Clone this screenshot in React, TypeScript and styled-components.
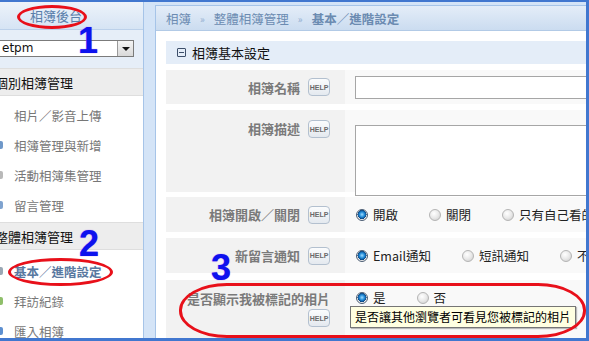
import React from 'react';
import styled, { createGlobalStyle } from 'styled-components';

const GlobalStyle = createGlobalStyle`
    html, body {
        margin: 0;
        padding: 0;
        background: #ffffff;
    }
    body {
        font-family: 'Noto Sans CJK TC', 'Liberation Sans', sans-serif;
        font-size: 13px;
    }
`;

const cjk = `'Noto Sans CJK TC', 'Liberation Sans', sans-serif`;

const Page = styled.div`
    position: relative;
    width: 589px;
    height: 341px;
    overflow: hidden;
`;

const Frame = styled.div`
    box-sizing: border-box;
    width: 589px;
    height: 341px;
    display: flex;
    background: #d4e4f7;
    border-top: 2px solid #4177cf;
    border-right: 3px solid #4177cf;
    border-bottom: 3px solid #4177cf;
`;

const Sidebar = styled.aside`
    width: 143px;
    flex-shrink: 0;
    display: flex;
    flex-direction: column;
    background: #ffffff;
    border-right: 1px solid #a6c4e8;
    overflow: hidden;
`;

const SideHeader = styled.div`
    box-sizing: border-box;
    height: 28px;
    flex-shrink: 0;
    display: flex;
    align-items: center;
    padding-left: 30px;
    background: linear-gradient(#edf3fa, #d6e4f4);
    border-bottom: 1px solid #bcd1ea;
`;

const SideTitle = styled.span`
    font-family: ${cjk};
    font-size: 13px;
    color: #5a7fab;
`;

const SelectRow = styled.div`
    box-sizing: border-box;
    height: 38px;
    flex-shrink: 0;
    padding-top: 10px;
    background: #e6eef8;
`;

const Select = styled.div`
    box-sizing: border-box;
    width: 134px;
    height: 17px;
    display: flex;
    align-items: center;
    justify-content: space-between;
    background: #ffffff;
    border: 1px solid #7b7b7b;
    border-left: none;
`;

const SelectText = styled.span`
    font-family: 'DejaVu Sans', 'Liberation Sans', sans-serif;
    font-size: 12px;
    color: #111;
    padding-left: 2px;
    line-height: 15px;
`;

const SelectButton = styled.span`
    box-sizing: border-box;
    width: 16px;
    height: 15px;
    display: flex;
    align-items: center;
    justify-content: center;
    background: linear-gradient(#f4f4f4, #d9d9d9);
    border-left: 1px solid #9a9a9a;
`;

const Arrow = styled.span`
    width: 0;
    height: 0;
    border-left: 4px solid transparent;
    border-right: 4px solid transparent;
    border-top: 4px solid #111;
`;

const GroupTitle = styled.div`
    box-sizing: border-box;
    height: 28px;
    flex-shrink: 0;
    display: flex;
    align-items: center;
    background: #ededed;
    border-top: 1px solid #dedede;
    border-bottom: 1px solid #dedede;
    font-family: ${cjk};
    font-size: 13px;
    color: #111;
    white-space: nowrap;

    span {
        margin-left: -5px;
    }
`;

const MenuList = styled.ul<{ $top: number; $bottom: number }>`
    flex-shrink: 0;
    list-style: none;
    margin: 0;
    padding: ${({ $top, $bottom }) => `${$top}px 0 ${$bottom}px`};
`;

const MenuItem = styled.li<{ $active?: boolean }>`
    height: 30px;
    display: flex;
    align-items: center;
    font-family: ${cjk};
    font-size: 12.5px;
    white-space: nowrap;
    color: ${({ $active }) => ($active ? '#58789f' : '#777777')};
    font-weight: ${({ $active }) => ($active ? 700 : 400)};
`;

const Bullet = styled.span<{ $color: string }>`
    width: 3px;
    height: 8px;
    margin-right: 11px;
    background: ${({ $color }) => $color};
    border-radius: 0 2px 2px 0;
`;

const Main = styled.main`
    flex: 1;
    min-width: 0;
    margin: 3px 0 0 11px;
    display: flex;
    flex-direction: column;
    background: #ffffff;
    border-left: 1px solid #a6c4e8;
    border-top: 1px solid #a6c4e8;
    overflow: hidden;
`;

const Crumbs = styled.nav`
    box-sizing: border-box;
    height: 25px;
    flex-shrink: 0;
    display: flex;
    align-items: center;
    padding-left: 10px;
    background: linear-gradient(#e4edf8, #cbdcf0);
    border-bottom: 1px solid #b2cae6;
    font-family: ${cjk};
    font-size: 12.5px;
    color: #6b8bb1;
    white-space: nowrap;
`;

const Crumb = styled.span<{ $current?: boolean }>`
    font-weight: ${({ $current }) => ($current ? 700 : 400)};
`;

const CrumbSep = styled.span`
    margin: 0 9px;
    font-size: 10px;
    color: #93aed0;
`;

const Content = styled.div`
    padding: 10px 0 0 10px;
    display: flex;
    flex-direction: column;
`;

const SectionBar = styled.div`
    height: 23px;
    flex-shrink: 0;
    display: flex;
    align-items: center;
    gap: 6px;
    padding-left: 11px;
    margin-bottom: 6px;
    background: #e4edf8;
    font-family: ${cjk};
    font-size: 13px;
    color: #111;
    white-space: nowrap;
`;

const Collapse = styled.span`
    box-sizing: border-box;
    width: 9px;
    height: 9px;
    border: 1px solid #3d4f6a;
    border-radius: 1px;
    display: flex;
    align-items: center;
    justify-content: center;

    &::after {
        content: '';
        width: 5px;
        height: 1px;
        background: #3d4f6a;
    }
`;

const FormRow = styled.div<{ $height: number; $gap: number }>`
    display: flex;
    flex-shrink: 0;
    height: ${({ $height }) => $height}px;
    margin-bottom: ${({ $gap }) => $gap}px;
`;

const LabelCell = styled.div<{ $top?: boolean }>`
    box-sizing: border-box;
    width: 179px;
    flex-shrink: 0;
    display: flex;
    flex-wrap: wrap;
    justify-content: flex-end;
    align-items: ${({ $top }) => ($top ? 'flex-start' : 'center')};
    align-content: ${({ $top }) => ($top ? 'flex-start' : 'center')};
    padding: ${({ $top }) => ($top ? '10px 15px 0 0' : '0 15px 0 0')};
    row-gap: 2px;
    background: #f2f2f2;
`;

const LabelText = styled.span`
    font-family: ${cjk};
    font-size: 13px;
    line-height: 17px;
    font-weight: 700;
    color: #7a7a7a;
    white-space: nowrap;
`;

const Help = styled.span`
    box-sizing: border-box;
    width: 22px;
    height: 18px;
    margin-left: 8px;
    display: inline-flex;
    align-items: center;
    justify-content: center;
    border: 1px solid #b3c0cf;
    border-radius: 4px;
    background: linear-gradient(#fbfcfd, #e4e9ef);
    font-family: 'Liberation Sans', sans-serif;
    font-size: 7px;
    font-weight: 700;
    color: #6a6a6a;
`;

const ValueCell = styled.div<{ $top?: boolean }>`
    position: relative;
    flex: 1;
    display: flex;
    align-items: ${({ $top }) => ($top ? 'flex-start' : 'center')};
    padding: ${({ $top }) => ($top ? '9px 0 0 10px' : '0 0 0 10px')};
    background: #f9f9f9;
    white-space: nowrap;
`;

const TextInput = styled.div`
    box-sizing: border-box;
    width: 260px;
    height: 23px;
    flex-shrink: 0;
    background: #ffffff;
    border: 1px solid #a6a6a6;
`;

const TextArea = styled.div`
    box-sizing: border-box;
    width: 260px;
    height: 71px;
    margin-top: 6px;
    flex-shrink: 0;
    background: #ffffff;
    border: 1px solid #a6a6a6;
`;

const Option = styled.label`
    display: flex;
    align-items: center;
    gap: 5px;
    margin: 0 30px 0 1px;
    font-family: ${cjk};
    font-size: 12.5px;
    line-height: 17px;
    color: #222;
`;

const Radio = styled.span<{ $checked?: boolean }>`
    box-sizing: border-box;
    width: 12px;
    height: 12px;
    flex-shrink: 0;
    border-radius: 50%;
    border: 1px solid ${({ $checked }) => ($checked ? '#4b5d73' : '#b4b4b4')};
    background: ${({ $checked }) =>
        $checked
            ? 'radial-gradient(circle at 50% 45%, #9fdcff 0, #1e88d6 35%, #0b3f7a 60%, #e8e8e8 62%, #ffffff 100%)'
            : 'radial-gradient(circle at 40% 35%, #ffffff 0, #e9e9e9 50%, #c9c9c9 100%)'};
`;

const Tooltip = styled.div`
    position: absolute;
    left: 5px;
    top: 26px;
    padding: 1px 4px;
    background: #ffffe1;
    border: 1px solid #767676;
    box-shadow: 1px 1px 1px rgba(0, 0, 0, 0.25);
    font-family: ${cjk};
    font-size: 12px;
    line-height: 18px;
    color: #000;
`;

const Ring = styled.div<{ $x: number; $y: number; $w: number; $h: number; $radius: string }>`
    position: absolute;
    box-sizing: border-box;
    left: ${({ $x }) => $x}px;
    top: ${({ $y }) => $y}px;
    width: ${({ $w }) => $w}px;
    height: ${({ $h }) => $h}px;
    border: 3px solid #e8101a;
    border-radius: ${({ $radius }) => $radius};
    pointer-events: none;
`;

const Marker = styled.span<{ $x: number; $y: number }>`
    position: absolute;
    left: ${({ $x }) => $x}px;
    top: ${({ $y }) => $y}px;
    font-family: 'Liberation Sans', Arial, sans-serif;
    font-size: 36px;
    line-height: 36px;
    font-weight: 700;
    color: #0d12ee;
    text-shadow: 0 0 1px #8a3cf0;
`;

const firstGroup = [
    { text: '相片／影音上傳', color: 'transparent' },
    { text: '相簿管理與新增', color: '#6f98c9' },
    { text: '活動相簿集管理', color: '#b9b9b9' },
    { text: '留言管理', color: '#7fa3cf' }
];

const secondGroup = [
    { text: '基本／進階設定', color: '#9aa7b4', active: true },
    { text: '拜訪紀錄', color: '#8fbf6a' },
    { text: '匯入相簿', color: '#5d8fd0' }
];

type Choice = { text: string; checked?: boolean };

const RadioGroup = ({ choices }: { choices: Choice[] }) => (
    <>
        {choices.map((c) => (
            <Option key={c.text}>
                <Radio $checked={c.checked} />
                {c.text}
            </Option>
        ))}
    </>
);

const App = () => (
    <Page>
        <GlobalStyle />
        <Frame>
            <Sidebar>
                <SideHeader>
                    <SideTitle>相簿後台</SideTitle>
                </SideHeader>
                <SelectRow>
                    <Select>
                        <SelectText>etpm</SelectText>
                        <SelectButton>
                            <Arrow />
                        </SelectButton>
                    </Select>
                </SelectRow>
                <GroupTitle>
                    <span>個別相簿管理</span>
                </GroupTitle>
                <MenuList $top={4} $bottom={2}>
                    {firstGroup.map((item) => (
                        <MenuItem key={item.text}>
                            <Bullet $color={item.color} />
                            {item.text}
                        </MenuItem>
                    ))}
                </MenuList>
                <GroupTitle>
                    <span>整體相簿管理</span>
                </GroupTitle>
                <MenuList $top={6} $bottom={0}>
                    {secondGroup.map((item) => (
                        <MenuItem key={item.text} $active={item.active}>
                            <Bullet $color={item.color} />
                            {item.text}
                        </MenuItem>
                    ))}
                </MenuList>
            </Sidebar>

            <Main>
                <Crumbs>
                    <Crumb>相簿</Crumb>
                    <CrumbSep>»</CrumbSep>
                    <Crumb>整體相簿管理</Crumb>
                    <CrumbSep>»</CrumbSep>
                    <Crumb $current>基本／進階設定</Crumb>
                </Crumbs>
                <Content>
                    <SectionBar>
                        <Collapse />
                        相簿基本設定
                    </SectionBar>

                    <FormRow $height={34} $gap={6}>
                        <LabelCell>
                            <LabelText>相簿名稱</LabelText>
                            <Help>HELP</Help>
                        </LabelCell>
                        <ValueCell>
                            <TextInput />
                        </ValueCell>
                    </FormRow>

                    <FormRow $height={82} $gap={5}>
                        <LabelCell $top>
                            <LabelText>相簿描述</LabelText>
                            <Help>HELP</Help>
                        </LabelCell>
                        <ValueCell $top>
                            <TextArea />
                        </ValueCell>
                    </FormRow>

                    <FormRow $height={35} $gap={6}>
                        <LabelCell>
                            <LabelText>相簿開啟／關閉</LabelText>
                            <Help>HELP</Help>
                        </LabelCell>
                        <ValueCell>
                            <RadioGroup
                                choices={[
                                    { text: '開啟', checked: true },
                                    { text: '關閉' },
                                    { text: '只有自己看的' }
                                ]}
                            />
                        </ValueCell>
                    </FormRow>

                    <FormRow $height={35} $gap={7}>
                        <LabelCell>
                            <LabelText>新留言通知</LabelText>
                            <Help>HELP</Help>
                        </LabelCell>
                        <ValueCell>
                            <RadioGroup
                                choices={[
                                    { text: 'Email通知', checked: true },
                                    { text: '短訊通知' },
                                    { text: '不公開' }
                                ]}
                            />
                        </ValueCell>
                    </FormRow>

                    <FormRow $height={60} $gap={0}>
                        <LabelCell $top>
                            <LabelText>是否顯示我被標記的相片</LabelText>
                            <Help>HELP</Help>
                        </LabelCell>
                        <ValueCell $top>
                            <RadioGroup choices={[{ text: '是', checked: true }, { text: '否' }]} />
                            <Tooltip>是否讓其他瀏覽者可看見您被標記的相片</Tooltip>
                        </ValueCell>
                    </FormRow>
                </Content>
            </Main>
        </Frame>

        <Ring $x={17} $y={5} $w={70} $h={24} $radius="50%" />
        <Ring $x={8} $y={258} $w={105} $h={28} $radius="50%" />
        <Ring $x={179} $y={283} $w={407} $h={55} $radius="48px / 27px" />

        <Marker $x={78} $y={23}>1</Marker>
        <Marker $x={79} $y={226}>2</Marker>
        <Marker $x={211} $y={250}>3</Marker>
    </Page>
);

export default App;
